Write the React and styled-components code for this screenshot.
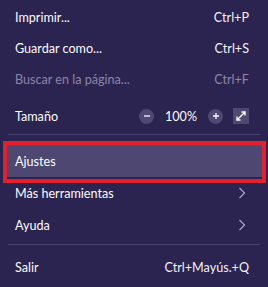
import React from "react";
import styled, { createGlobalStyle } from "styled-components";

const Global = createGlobalStyle`
  html, body { margin: 0; padding: 0; background: #2b2350; }
  body { font-family: Lato, "Noto Sans", sans-serif; }
`;

const Menu = styled.div`
  width: 268px;
  height: 287px;
  box-sizing: border-box;
  background: #2b2350;
  padding-top: 2px;
  display: flex;
  flex-direction: column;
  color: #fbfbfe;
  font-size: 12.6px;
  overflow: hidden;
`;

const Item = styled.div`
  position: relative;
  height: ${(p) => p.$h || 31}px;
  margin: 0 4px;
  padding: 0 15px 0 11px;
  display: flex;
  align-items: center;
  justify-content: space-between;
  border-radius: 2px;
  background: ${(p) => (p.$active ? "#4d4772" : "transparent")};
  color: ${(p) => (p.$disabled ? "#8b86a8" : "#fbfbfe")};
`;

const Shortcut = styled.span`
  color: ${(p) => (p.$disabled ? "#8b86a8" : "#f2f1f8")};
`;

const ZoomRow = styled(Item)`
  height: 39px;
  padding-top: 3px;
  box-sizing: border-box;
`;

const ZoomControls = styled.div`
  display: flex;
  align-items: center;
`;

const RoundBtn = styled.span`
  width: 15px;
  height: 15px;
  border-radius: 50%;
  background: #4e4873;
  display: flex;
  align-items: center;
  justify-content: center;
`;

const Percent = styled.span`
  width: 54px;
  text-align: center;
`;

const SquareBtn = styled.span`
  width: 16px;
  height: 16px;
  margin-left: 10px;
  background: #4e4873;
  display: flex;
  align-items: center;
  justify-content: center;
`;

const Separator = styled.div`
  height: 1px;
  margin: ${(p) => p.$m || "0"};
  margin-left: 8px;
  margin-right: 8px;
  background: #4a4270;
`;

const Highlight = styled.div`
  position: absolute;
  top: -4px;
  bottom: -6px;
  left: -1px;
  right: -2px;
  border: 4px solid #e3202c;
  pointer-events: none;
`;

const Chevron = () => (
  <svg width="8" height="12" viewBox="0 0 8 12" style={{ marginRight: 3 }}>
    <path d="M1.5 1 L6.5 6 L1.5 11" fill="none" stroke="#a9a4c8" strokeWidth="1.2" />
  </svg>
);

export default function App() {
  return (
    <>
      <Global />
      <Menu>
        <Item>
          <span>Imprimir...</span>
          <Shortcut>Ctrl+P</Shortcut>
        </Item>
        <Item>
          <span>Guardar como...</span>
          <Shortcut>Ctrl+S</Shortcut>
        </Item>
        <Item $disabled>
          <span>Buscar en la página...</span>
          <Shortcut $disabled>Ctrl+F</Shortcut>
        </Item>
        <ZoomRow>
          <span>Tamaño</span>
          <ZoomControls>
            <RoundBtn>
              <svg width="8" height="8" viewBox="0 0 8 8">
                <path d="M1 4 H7" stroke="#fbfbfe" strokeWidth="1.3" />
              </svg>
            </RoundBtn>
            <Percent>100%</Percent>
            <RoundBtn>
              <svg width="8" height="8" viewBox="0 0 8 8">
                <path d="M1 4 H7 M4 1 V7" stroke="#fbfbfe" strokeWidth="1.3" />
              </svg>
            </RoundBtn>
            <SquareBtn>
              <svg width="12" height="12" viewBox="0 0 12 12">
                <path
                  d="M2 10 L10 2 M6.5 2 H10 V5.5 M2 6.5 V10 H5.5"
                  fill="none"
                  stroke="#fbfbfe"
                  strokeWidth="1.4"
                />
              </svg>
            </SquareBtn>
          </ZoomControls>
        </ZoomRow>
        <Separator $m="0 0 10px 0" />
        <Item $h={32} $active>
          <span>Ajustes</span>
          <Highlight />
        </Item>
        <Item $h={32}>
          <span>Más herramientas</span>
          <Chevron />
        </Item>
        <Item $h={32}>
          <span>Ayuda</span>
          <Chevron />
        </Item>
        <Separator $m="3px 0 7px 0" />
        <Item>
          <span>Salir</span>
          <Shortcut>Ctrl+Mayús.+Q</Shortcut>
        </Item>
      </Menu>
    </>
  );
}
